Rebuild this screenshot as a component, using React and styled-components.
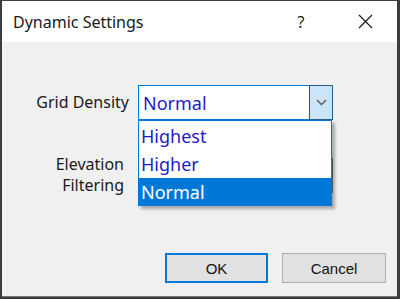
import React from "react";
import styled, { createGlobalStyle } from "styled-components";

const Global = createGlobalStyle`
  html, body { margin: 0; padding: 0; }
  body {
    width: 400px;
    height: 299px;
    overflow: hidden;
    background: #3b3d3a;
    font-family: "Noto Sans", "Open Sans", sans-serif;
  }
  #root { height: 299px; }
`;

const Window = styled.div`
  box-sizing: border-box;
  margin: 1px 3px 0 2px;
  height: 296px;
  display: flex;
  flex-direction: column;
  background: #f0f0f0;
  border-bottom: 1px solid #777;
`;

const TitleBar = styled.div`
  height: 41px;
  flex: none;
  display: flex;
  align-items: center;
  background: #ffffff;
  padding: 0 12px 0 11px;
`;

const Title = styled.span`
  flex: 1;
  font-size: 16px;
  color: #1a1a1a;
`;

const TitleButton = styled.button`
  width: ${(p) => p.$w}px;
  height: 41px;
  border: 0;
  background: transparent;
  padding: 0;
  display: flex;
  align-items: center;
  justify-content: center;
  font-family: "Noto Sans", sans-serif;
  font-size: 16px;
  color: #1a1a1a;
`;

const Spacer = styled.div`
  width: ${(p) => p.$w}px;
`;

const Body = styled.div`
  flex: 1;
  display: flex;
  flex-direction: column;
  padding: 43px 11px 13px 0;
`;

const Form = styled.div`
  display: grid;
  grid-template-columns: 136px 195px;
  row-gap: 34px;
  align-items: center;
`;

const Label = styled.div`
  font-size: 16px;
  line-height: 21px;
  color: #1a1a1a;
  text-align: right;
  padding-right: ${(p) => p.$pr}px;
`;

const ComboWrap = styled.div`
  position: relative;
  height: 35px;
`;

const Combo = styled.div`
  box-sizing: border-box;
  height: 35px;
  display: flex;
  align-items: stretch;
  background: #fff;
  border: 1px solid ${(p) => (p.$focus ? "#0078d7" : "#7a7a7a")};
`;

const ComboText = styled.div`
  flex: 1;
  display: flex;
  align-items: center;
  padding-left: 4px;
  font-size: 18px;
  color: #1c1cc8;
`;

const ComboButton = styled.div`
  box-sizing: border-box;
  width: 24px;
  margin: -1px -1px -1px 0;
  display: flex;
  align-items: center;
  justify-content: center;
  background: #cce4f7;
  border: 1px solid #2a5d8c;
`;

const List = styled.div`
  position: absolute;
  top: 35px;
  left: 0;
  width: 194px;
  box-sizing: border-box;
  border: 1px solid #0078d7;
  background: #fff;
  box-shadow: 3px 3px 3px rgba(0, 0, 0, 0.3);
  z-index: 5;
  display: flex;
  flex-direction: column;
`;

const Item = styled.div`
  height: ${(p) => p.$h}px;
  display: flex;
  align-items: center;
  padding-left: 2px;
  font-size: 18px;
  color: ${(p) => (p.$sel ? "#ffffff" : "#1c1cc8")};
  background: ${(p) => (p.$sel ? "#0078d7" : "#ffffff")};
`;

const Buttons = styled.div`
  margin-top: auto;
  display: flex;
  justify-content: flex-end;
  gap: 14px;
`;

const Button = styled.button`
  box-sizing: border-box;
  width: ${(p) => p.$w}px;
  height: 30px;
  background: #e1e1e1;
  border: ${(p) => (p.$def ? "2px solid #0078d7" : "1px solid #adadad")};
  font-family: "Liberation Sans", Arial, sans-serif;
  font-size: 15px;
  color: #111;
  padding: 0;
`;

const Chevron = () => (
  <svg width="11" height="7" viewBox="0 0 11 7">
    <path d="M1 1 L5.5 5.5 L10 1" fill="none" stroke="#555" strokeWidth="1.3" />
  </svg>
);

const CloseIcon = () => (
  <svg width="15" height="15" viewBox="0 0 15 15">
    <path d="M1 1 L14 14 M14 1 L1 14" stroke="#1a1a1a" strokeWidth="1.2" />
  </svg>
);

export default function App() {
  return (
    <>
      <Global />
      <Window>
        <TitleBar>
          <Title>Dynamic Settings</Title>
          <TitleButton $w={36}>?</TitleButton>
          <Spacer $w={26} />
          <TitleButton $w={40}>
            <CloseIcon />
          </TitleButton>
        </TitleBar>
        <Body>
          <Form>
            <Label $pr={9}>Grid Density</Label>
            <ComboWrap>
              <Combo $focus>
                <ComboText>Normal</ComboText>
                <ComboButton>
                  <Chevron />
                </ComboButton>
              </Combo>
              <List>
                <Item $h={29}>Highest</Item>
                <Item $h={28}>Higher</Item>
                <Item $h={27} $sel>
                  Normal
                </Item>
              </List>
            </ComboWrap>
            <Label $pr={14}>
              Elevation
              <br />
              Filtering
            </Label>
            <ComboWrap>
              <Combo />
            </ComboWrap>
          </Form>
          <Buttons>
            <Button $w={103} $def>
              OK
            </Button>
            <Button $w={104}>Cancel</Button>
          </Buttons>
        </Body>
      </Window>
    </>
  );
}
